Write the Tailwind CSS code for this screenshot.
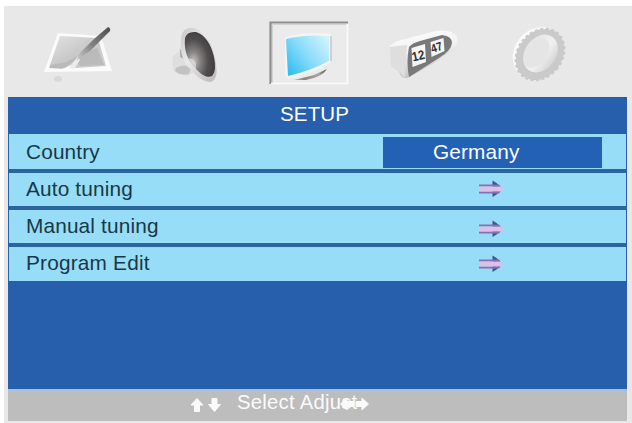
<!DOCTYPE html>
<html lang="en">
<head>
<meta charset="utf-8">
<title>Setup</title>
<script src="https://cdn.jsdelivr.net/npm/@tailwindcss/browser@4"></script>
</head>
<body class="bg-white w-[632px] h-[423px] overflow-hidden font-['Liberation_Sans',Arial,sans-serif] text-[20.8px] leading-[20px] tracking-[0.15px]">
<svg class="absolute w-0 h-0"><defs>
  <symbol id="arrow" viewBox="0 0 26 18"><path d="M13.500 .5L17.500 3L24 9L17.500 14.500L13.500 17Z" fill="#3d5590"/><path d="M0 4.500H20L21.500 6.500H0Z" fill="#8273b0"/><path d="M0 11.500H21.500L20 13.500H0Z" fill="#8273b0"/><path d="M0 6.500H22L25 9L22 11.500H0Z" fill="#dcc0ea"/></symbol>
</defs></svg>
<div class="ml-1 pt-[6px] h-[423px]">
<div class="bg-[#e8e8e8] h-[417px] pl-1 pr-[4px] flex flex-col">
  <header class="h-[91px] shrink-0 flex">
    <svg class="w-[620px] h-[91px]" viewBox="8 6 620 91">
      <defs>
        <linearGradient id="paper" x1="0" y1="0" x2="1" y2="1"><stop offset="0" stop-color="#e2e2e2"/><stop offset=".5" stop-color="#c9c9c9"/><stop offset="1" stop-color="#cfcfcf"/></linearGradient>
        <linearGradient id="pen" x1="1" y1="0" x2="0" y2="1"><stop offset="0" stop-color="#4c4c4c"/><stop offset=".55" stop-color="#858585"/><stop offset="1" stop-color="#cfcfcf"/></linearGradient>
        <radialGradient id="cone" cx=".28" cy=".66" r=".65"><stop offset="0" stop-color="#c8c4c4"/><stop offset=".35" stop-color="#858282"/><stop offset=".75" stop-color="#514e50"/><stop offset="1" stop-color="#444143"/></radialGradient>
        <linearGradient id="rim" x1="0" y1="0" x2="1" y2="1"><stop offset="0" stop-color="#c6c6c6"/><stop offset=".4" stop-color="#e9e9e9"/><stop offset="1" stop-color="#b8b8b8"/></linearGradient>
        <linearGradient id="screen" x1="0" y1=".8" x2="1" y2=".1"><stop offset="0" stop-color="#36bdf2"/><stop offset=".45" stop-color="#86dbfa"/><stop offset="1" stop-color="#d2f3fb"/></linearGradient>
        <linearGradient id="base" x1="0" x2="1"><stop offset="0" stop-color="#c4b4ac"/><stop offset=".3" stop-color="#8d8583"/><stop offset=".75" stop-color="#aaa4a4"/><stop offset="1" stop-color="#504d4d"/></linearGradient>
        <linearGradient id="shell" x1="0" y1="0" x2=".3" y2="1"><stop offset="0" stop-color="#fff"/><stop offset=".5" stop-color="#f1f1f1"/><stop offset="1" stop-color="#c4c4c4"/></linearGradient>
        <linearGradient id="wall" x1="0" x2="1"><stop offset="0" stop-color="#e6e6e6"/><stop offset=".6" stop-color="#f0f0f0"/><stop offset="1" stop-color="#d6d6d6"/></linearGradient>
        <filter id="soft" x="-10%" y="-10%" width="120%" height="120%"><feGaussianBlur stdDeviation=".7"/></filter>
      </defs>
      <g filter="url(#soft)">
        <path d="M58 33L101 36L112 71L44 72Z" fill="#fbfbfb"/>
        <path d="M60 36L98 38L106 66L76 68L71 65L62 69L49 68Z" fill="url(#paper)"/>
        <path d="M50 65L66 62L83 53L97 48L104 65L80 66L75 60L65 68L50 68Z" fill="#aaa" opacity=".5"/>
        <path d="M69 68L78 56L80 60L74 69Z" fill="#ececec"/>
        <path d="M108 27Q111 28 110 31L91 50L76 61L80 53L94 39Z" fill="url(#pen)"/>
        <ellipse cx="58" cy="79" rx="4" ry="3" fill="#d8d8d8"/>
      </g>
      <g filter="url(#soft)">
        <path d="M181 50L173 56Q171 65 175 72L187 76L194 72L187 58Z" fill="#dedede"/>
        <path d="M180 49L183 50L184 59L180 57Z" fill="#aeaeae"/>
        <path d="M176 68Q184 63 191 68L189 74Q180 76 175 71Z" fill="#c2c2c2"/>
        <path d="M181 38Q183 26 194 28Q209 32 214 54Q219 74 214 80Q209 85 198 77L187 66Q179 54 181 38Z" fill="url(#rim)"/>
        <path d="M185 38Q187 31 196 32Q209 36 214 57Q217 71 212 76Q206 79 198 71Q183 58 185 38Z" fill="url(#cone)"/>
        <path d="M186 60Q191 56 196 63L196 70L188 66Z" fill="#e6e6e6" opacity=".6"/>
      </g>
      <g>
        <rect x="271" y="22" width="77" height="62" fill="#ebebeb"/>
        <path d="M270.500 84V22.500H348" fill="none" stroke="#8e8e8e" stroke-width="2.200"/>
        <path d="M272.500 84V24.500H346" fill="none" stroke="#d2d2d2" stroke-width="1"/>
        <path d="M347.500 24V83.500H271" fill="none" stroke="#fafafa" stroke-width="1.600"/>
      </g>
      <g filter="url(#soft)">
        <path d="M285 37Q306 31 330 34L332 36L331 62L323 68L296 77L288 78L285 74Z" fill="#f4f4f4"/>
        <path d="M331 36V61" stroke="#c6c6c6" stroke-width="1.500"/>
        <path d="M286 39Q306 34 329 36L329 61Q310 71 288 76Z" fill="url(#screen)"/>
        <path d="M294 80L314 75L327 69Q322 77 306 80Z" fill="url(#base)"/>
      </g>
      <g filter="url(#soft)">
        <path d="M390 46Q395 41 405 39L436 31Q452 29 457 37Q459 44 452 51L434 63L408 78Q401 79 399 72L391 66Z" fill="url(#shell)"/>
        <path d="M390 47L407 45L405 78L400 72L391 66Z" fill="#dedede"/>
        <path d="M409 47Q412 43 420 41L442 35Q452 36 452 43Q451 51 439 58L409 77Q406 62 409 47Z" fill="#797979"/>
        <path d="M411.500 48L425 44L426 62L412.500 67Z M430.500 42L443.500 38L444.500 51L431.500 57Z" fill="#f6f6f6"/>
      </g>
      <g fill="#303030" font-family="Liberation Sans, Arial, sans-serif" font-weight="700" letter-spacing="0">
        <text transform="translate(413 61.500) rotate(-13) scale(.88 1)" font-size="13">12</text>
        <text transform="translate(432.300 53) rotate(-17) scale(.85 1)" font-size="12">47</text>
      </g>
      <g filter="url(#soft)">
        <ellipse cx="537.500" cy="53" rx="23" ry="27.500" transform="rotate(38 537.500 53)" fill="#fafafa"/>
        <ellipse cx="540" cy="54.500" rx="22" ry="27.500" transform="rotate(38 540 54.500)" fill="#cacaca" stroke="#cacaca" stroke-width="2.500" stroke-dasharray="3 2.500"/>
        <ellipse cx="540.500" cy="53.500" rx="15.500" ry="20.500" transform="rotate(36 540.500 53.500)" fill="url(#wall)"/>
        <ellipse cx="536.500" cy="53" rx="10.500" ry="16.500" transform="rotate(36 536.500 53)" fill="#e5e5e5"/>
      </g>
    </svg>
  </header>
  <main class="w-[619px] h-[292px] shrink-0 bg-[#285fac] px-px shadow-[inset_0_1px_0_#285a9a]">
    <h1 class="h-[37px] pt-[7px] pl-[271px] text-white text-[20.5px]">SETUP</h1>
    <div class="flex flex-col gap-[4px] bg-[#2a659f] text-[#173848]">
      <div class="h-[35px] bg-[#98ddf7] pl-[17px] pr-6 flex justify-between">
        <span class="pt-[8px]">Country</span>
        <span class="mt-[3px] h-[31px] w-[219px] bg-[#2261b4] text-white pt-[5px] pl-[50px]">Germany</span>
      </div>
      <div class="h-[33px] bg-[#98ddf7] pl-[17px] pr-[121px] flex justify-between"><span class="pt-[6px]">Auto tuning</span><svg class="w-[26px] h-[18px] mt-[7px]"><use href="#arrow"/></svg></div>
      <div class="h-[33px] bg-[#98ddf7] pl-[17px] pr-[121px] flex justify-between"><span class="pt-[6px]">Manual tuning</span><svg class="w-[26px] h-[18px] mt-[10px]"><use href="#arrow"/></svg></div>
      <div class="h-[34px] bg-[#98ddf7] pl-[17px] pr-[121px] flex justify-between"><span class="pt-[6px] tracking-[0.2px]">Program Edit</span><svg class="w-[26px] h-[18px] mt-[8px]"><use href="#arrow"/></svg></div>
    </div>
  </main>
  <footer class="w-[619px] h-[32px] shrink-0 bg-[#bdbdbd] border-t-2 border-[#a9bfdb] text-[#fafafa] flex">
    <svg class="w-[32px] h-[18px] mt-[6px] ml-[182px]" viewBox="0 0 32 18" fill="#fafafa" stroke="#fafafa" stroke-width="1" stroke-linejoin="round"><path d="M7 1.500L13 8H9.500V14.500H4.500V8H1Z"/><path d="M22 1.500H27V7.500H30.500L24.500 14.500L18.500 7.500H22Z"/></svg>
    <div class="relative ml-[15px] pt-px whitespace-pre text-[20.3px] tracking-[0.25px]">Select Adjust<svg class="absolute left-[102px] top-[5px] w-[32px] h-[16px]" viewBox="0 0 32 16" fill="#fafafa" stroke="#fafafa" stroke-width="1" stroke-linejoin="round"><path d="M1.500 8L8 2V5.500H14V10.500H8V14Z"/><path d="M29.500 8L23 2V5.500H17V10.500H23V14Z"/></svg></div>
  </footer>
</div>
</div>
</body>
</html>
